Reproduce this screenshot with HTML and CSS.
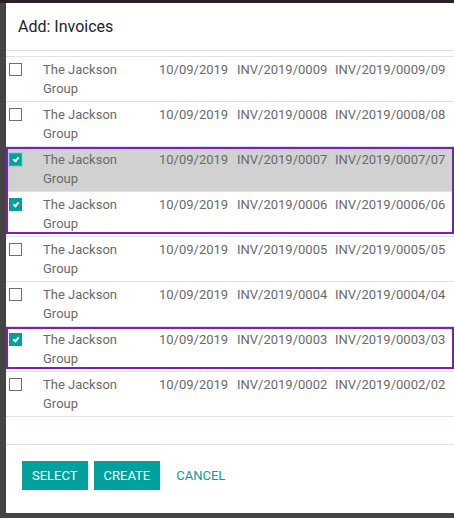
FILE: index.html
```html
<!DOCTYPE html>
<html lang="en">
<head>
    <meta charset="UTF-8">
    <title>Add: Invoices</title>
    <link rel="stylesheet" href="styles.css">
</head>
<body>
    <div class="modal">
        <div class="modal-header">
            <h4 class="modal-title">Add: Invoices</h4>
        </div>

        <div class="modal-body">
            <div class="list">
                <div class="row">
                    <div class="cell cell-check"><span class="checkbox"></span></div>
                    <div class="cell">The Jackson Group</div>
                    <div class="cell">10/09/2019</div>
                    <div class="cell">INV/2019/0009</div>
                    <div class="cell">INV/2019/0009/09</div>
                </div>
                <div class="row">
                    <div class="cell cell-check"><span class="checkbox"></span></div>
                    <div class="cell">The Jackson Group</div>
                    <div class="cell">10/09/2019</div>
                    <div class="cell">INV/2019/0008</div>
                    <div class="cell">INV/2019/0008/08</div>
                </div>

                <div class="group">
                    <div class="row row-active">
                        <div class="cell cell-check"><span class="checkbox checked focused"></span></div>
                        <div class="cell">The Jackson Group</div>
                        <div class="cell">10/09/2019</div>
                        <div class="cell">INV/2019/0007</div>
                        <div class="cell">INV/2019/0007/07</div>
                    </div>
                    <div class="row">
                        <div class="cell cell-check"><span class="checkbox checked"></span></div>
                        <div class="cell">The Jackson Group</div>
                        <div class="cell">10/09/2019</div>
                        <div class="cell">INV/2019/0006</div>
                        <div class="cell">INV/2019/0006/06</div>
                    </div>
                </div>

                <div class="row">
                    <div class="cell cell-check"><span class="checkbox"></span></div>
                    <div class="cell">The Jackson Group</div>
                    <div class="cell">10/09/2019</div>
                    <div class="cell">INV/2019/0005</div>
                    <div class="cell">INV/2019/0005/05</div>
                </div>
                <div class="row">
                    <div class="cell cell-check"><span class="checkbox"></span></div>
                    <div class="cell">The Jackson Group</div>
                    <div class="cell">10/09/2019</div>
                    <div class="cell">INV/2019/0004</div>
                    <div class="cell">INV/2019/0004/04</div>
                </div>

                <div class="group">
                    <div class="row">
                        <div class="cell cell-check"><span class="checkbox checked"></span></div>
                        <div class="cell">The Jackson Group</div>
                        <div class="cell">10/09/2019</div>
                        <div class="cell">INV/2019/0003</div>
                        <div class="cell">INV/2019/0003/03</div>
                    </div>
                </div>

                <div class="row row-last">
                    <div class="cell cell-check"><span class="checkbox"></span></div>
                    <div class="cell">The Jackson Group</div>
                    <div class="cell">10/09/2019</div>
                    <div class="cell">INV/2019/0002</div>
                    <div class="cell">INV/2019/0002/02</div>
                </div>
            </div>
        </div>

        <div class="modal-footer">
            <button class="btn btn-primary">Select</button>
            <button class="btn btn-primary">Create</button>
            <button class="btn btn-link">Cancel</button>
        </div>
    </div>
</body>
</html>
```

FILE: styles.css
```css
body {
    margin: 0;
    height: 518px;
    overflow: hidden;
    font-family: Roboto, 'Noto Sans', sans-serif;
    background: linear-gradient(#2b1f28 0, #2b1f28 3px, #444444 3px);
    padding: 3px 0 0 6px;
    box-sizing: border-box;
}
.modal {
    background: white;
    width: 448px;
    height: 510px;
    display: flex;
    flex-direction: column;
    overflow: hidden;
}
.modal-header {
    height: 47px;
    border-bottom: 1px solid #dee2e6;
    display: flex;
    align-items: center;
    padding: 0 12px;
    flex: none;
}
.modal-title {
    margin: 0;
    font-size: 16px;
    font-weight: 400;
    color: #212529;
}
.modal-body {
    flex: 1;
    padding-top: 5px;
    overflow: hidden;
}
.row {
    display: grid;
    grid-template-columns: 33px 116px 78px 98px 1fr;
    border-top: 1px solid #dee2e6;
    font-size: 13px;
    line-height: 19px;
    color: #6a6a6a;
    height: 44px;
}
.row-last {
    border-bottom: 1px solid #dee2e6;
}
.row-active {
    background: #d1d1d1;
}
.cell {
    padding: 3px 4px;
}
.cell:nth-child(n+3) {
    white-space: nowrap;
}
.cell-check {
    padding-left: 3px;
}
.checkbox {
    display: block;
    width: 13px;
    height: 13px;
    margin-top: 3px;
    border: 1px solid #707070;
    box-sizing: border-box;
    background: white;
    position: relative;
}
.checkbox.checked {
    background: #00a09d;
    border-color: #00a09d;
}
.checkbox.checked::after {
    content: "";
    position: absolute;
    left: 4px;
    top: 2px;
    width: 2px;
    height: 4px;
    border: solid white;
    border-width: 0 2px 2px 0;
    transform: rotate(40deg);
}
.checkbox.focused {
    border-color: #8a8a8a;
    box-shadow: 0 0 0 1px #a6cfcd;
}
.group {
    position: relative;
}
.group::after {
    content: "";
    position: absolute;
    top: 1px;
    left: 0;
    right: 0;
    bottom: 2px;
    border: 2px solid #7d1cbf;
    pointer-events: none;
}
.modal-footer {
    flex: none;
    border-top: 1px solid #dee2e6;
    padding: 16px 16px 23px;
    display: flex;
    gap: 6px;
}
.btn {
    font-family: Roboto, 'Noto Sans', sans-serif;
    font-size: 13px;
    font-weight: 400;
    text-transform: uppercase;
    height: 29px;
    padding: 0 10px;
    border: none;
    border-radius: 0;
    cursor: pointer;
}
.btn-primary {
    background: #00a09d;
    color: white;
}
.btn-link {
    background: none;
    color: #00a09d;
}
```
